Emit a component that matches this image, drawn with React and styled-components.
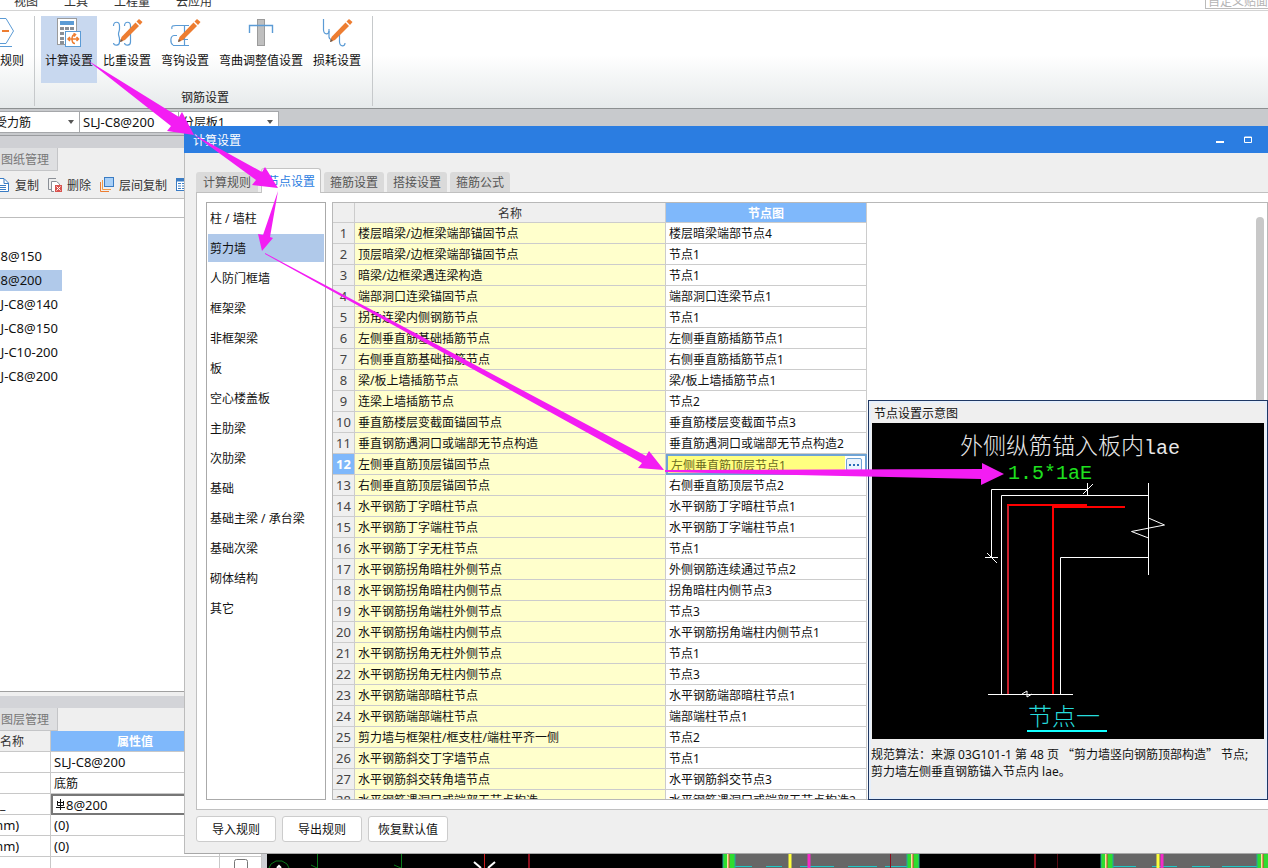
import React from "react";
import styled, { createGlobalStyle, css } from "styled-components";

const menus = ["视图", "工具", "工程量", "云应用"];

const treeItems = [
  { name: "C8@150", end: 42 },
  { name: "C8@200", end: 42, active: true },
  { name: "J-C8@140", end: 58 },
  { name: "J-C8@150", end: 58 },
  { name: "J-C10-200", end: 58 },
  { name: "J-C8@200", end: 58 },
];

const tabs = ["计算规则", "节点设置", "箍筋设置", "搭接设置", "箍筋公式"];

const members = [
  "柱 / 墙柱",
  "剪力墙",
  "人防门框墙",
  "框架梁",
  "非框架梁",
  "板",
  "空心楼盖板",
  "主肋梁",
  "次肋梁",
  "基础",
  "基础主梁 / 承台梁",
  "基础次梁",
  "砌体结构",
  "其它",
];

const nodes = [
  ["楼层暗梁/边框梁端部锚固节点", "楼层暗梁端部节点4"],
  ["顶层暗梁/边框梁端部锚固节点", "节点1"],
  ["暗梁/边框梁遇连梁构造", "节点1"],
  ["端部洞口连梁锚固节点", "端部洞口连梁节点1"],
  ["拐角连梁内侧钢筋节点", "节点1"],
  ["左侧垂直筋基础插筋节点", "左侧垂直筋插筋节点1"],
  ["右侧垂直筋基础插筋节点", "右侧垂直筋插筋节点1"],
  ["梁/板上墙插筋节点", "梁/板上墙插筋节点1"],
  ["连梁上墙插筋节点", "节点2"],
  ["垂直筋楼层变截面锚固节点", "垂直筋楼层变截面节点3"],
  ["垂直钢筋遇洞口或端部无节点构造", "垂直筋遇洞口或端部无节点构造2"],
  ["左侧垂直筋顶层锚固节点", "左侧垂直筋顶层节点1"],
  ["右侧垂直筋顶层锚固节点", "右侧垂直筋顶层节点2"],
  ["水平钢筋丁字暗柱节点", "水平钢筋丁字暗柱节点1"],
  ["水平钢筋丁字端柱节点", "水平钢筋丁字端柱节点1"],
  ["水平钢筋丁字无柱节点", "节点1"],
  ["水平钢筋拐角暗柱外侧节点", "外侧钢筋连续通过节点2"],
  ["水平钢筋拐角暗柱内侧节点", "拐角暗柱内侧节点3"],
  ["水平钢筋拐角端柱外侧节点", "节点3"],
  ["水平钢筋拐角端柱内侧节点", "水平钢筋拐角端柱内侧节点1"],
  ["水平钢筋拐角无柱外侧节点", "节点1"],
  ["水平钢筋拐角无柱内侧节点", "节点3"],
  ["水平钢筋端部暗柱节点", "水平钢筋端部暗柱节点1"],
  ["水平钢筋端部端柱节点", "端部端柱节点1"],
  ["剪力墙与框架柱/框支柱/端柱平齐一侧", "节点2"],
  ["水平钢筋斜交丁字墙节点", "节点1"],
  ["水平钢筋斜交转角墙节点", "水平钢筋斜交节点3"],
  ["水平钢筋遇洞口或端部无节点构造", "水平钢筋遇洞口或端部无节点构造2"],
];

const Pencil = () => (
  <g fill="#ed7d31">
    <path d="M9 25 L10.5 20 L24.5 5.5 L28 9 L14 23 Z" />
    <path d="M25.5 4.5 L28 2 L31.5 5 L29 8 Z" />
    <path d="M9 25 L9.8 22 L12 24 Z" fill="#6b5a50" />
  </g>
);

const CalcIcon = () => (
  <RibbonIcon viewBox="0 0 32 32">
    <rect x="4.5" y="1.5" width="19" height="26" fill="#fff" stroke="#9b9b9b" />
    <rect x="7" y="4" width="14" height="4" fill="#5b9bd5" />
    {[10, 15, 20, 24].map((y) =>
      [7, 12, 17].map((x) => (
        <rect key={x + "-" + y} x={x} y={y} width="4" height="3" fill="#8a8f96" />
      ))
    )}
    <rect x="12.5" y="14.5" width="15" height="15" fill="#fff" stroke="#5b9bd5" />
    <path
      d="M15 22 H25 M17 20 L15 22 L17 24 M22 17.5 C19 18 19 20 19 22 C19 25 20 26.5 22 26.5 M20.5 16.5 L22.5 17.5 L21 19.5 M23.5 20 L25.5 22 L23.5 24"
      fill="none"
      stroke="#ed7d31"
      strokeWidth="1.5"
    />
  </RibbonIcon>
);

const WeightIcon = () => (
  <RibbonIcon viewBox="0 0 32 32">
    <g fill="none" stroke="#5b9bd5" strokeWidth="1.2">
      <path d="M2.5 9 C2.5 4 8.5 4 8.5 9 V12 C8.5 14 7.5 15 7.5 17 C7.5 19 8.5 20 8.5 22 V25 C8.5 29 3 29 2.5 26" />
      <path d="M13.5 9 C13.5 4 19.5 4 19.5 9 V25 C19.5 29 14 29 13.5 26" />
    </g>
    <Pencil />
  </RibbonIcon>
);

const HookIcon = () => (
  <RibbonIcon viewBox="0 0 32 32">
    <g fill="none" stroke="#5b9bd5" strokeWidth="1.2">
      <path d="M3 12 C2 8.5 4 8.5 7 8.5 H20" />
      <path d="M8 18.5 H5 C1 19 1 26 4 28 M4 28.5 H20" />
      <path d="M15.5 9 V28 M11 22.5 H19" />
    </g>
    <Pencil />
  </RibbonIcon>
);

const BendIcon = () => (
  <RibbonIcon viewBox="0 0 32 32">
    <rect x="12.5" y="2.5" width="7" height="26" fill="#bfbfbf" stroke="#9b9b9b" />
    <path d="M4.5 16 V8.5 H27.5 V16" fill="none" stroke="#5b9bd5" strokeWidth="1.4" />
  </RibbonIcon>
);

const LossIcon = () => (
  <RibbonIcon viewBox="0 0 32 32">
    <g fill="none" stroke="#5b9bd5" strokeWidth="1.2">
      <path d="M2.5 2 V13 C3 18 8 18 8 14" />
      <path d="M8 12 V20 C9 24 13 22 13 19 M18.5 17 V25 C19 30 24 30 24 26" />
    </g>
    <Pencil />
  </RibbonIcon>
);

const ribbon = [
  { label: "计算设置", Icon: CalcIcon, active: true },
  { label: "比重设置", Icon: WeightIcon },
  { label: "弯钩设置", Icon: HookIcon },
  { label: "弯曲调整值设置", Icon: BendIcon },
  { label: "损耗设置", Icon: LossIcon },
];

const Combo = ({ label, value, width, cut, latin }) => (
  <ComboBox $width={width}>
    <ComboSelect aria-label={label} $cut={cut} $latin={latin} defaultValue={value}>
      <option>{value}</option>
    </ComboSelect>
    <Caret viewBox="0 0 6 4">
      <path d="M0 0 H6 L3 4 Z" fill="#555" />
    </Caret>
  </ComboBox>
);

const Ribbon = () => (
  <RibbonBar>
    <RuleGroup>
      <RuleButton>
        <RuleIcon viewBox="0 0 24 32">
          <path d="M0 1.5 H6 L13.5 14 L6 26.5 H0" fill="none" stroke="#5b9bd5" />
          <path d="M2 14 H9" stroke="#ed7d31" strokeWidth="2" />
          <path d="M0 29.5 H12" stroke="#5b9bd5" />
        </RuleIcon>
        规则
      </RuleButton>
    </RuleGroup>
    <RibbonGroup>
      <RibbonButtons>
        {ribbon.map(({ label, Icon, active }) => (
          <RibbonButton key={label} $active={active}>
            <Icon />
            {label}
          </RibbonButton>
        ))}
      </RibbonButtons>
      <GroupLabel>钢筋设置</GroupLabel>
    </RibbonGroup>
  </RibbonBar>
);

const TreeTools = () => (
  <ToolRow>
    <Tool>
      <svg width="9" height="16" viewBox="0 0 9 16">
        <path d="M0 1.5 H4 L8.5 6 V14.5 H0" fill="#fff" stroke="#3a7cc4" />
        <path d="M4 2 V6.5 H8" fill="none" stroke="#3a7cc4" />
        <path d="M0 8.5 H6 M0 10.5 H6 M0 12.5 H6" stroke="#3a7cc4" />
      </svg>
      <ToolText>复制</ToolText>
    </Tool>
    <Tool>
      <svg width="14" height="16" viewBox="0 0 14 16">
        <path d="M3 12.5 H0.5 V1.5 H8" fill="none" stroke="#8a8f96" />
        <path d="M6 14.5 H3.5 V4.5 H8.5 L11.5 7 V8" fill="#fff" stroke="#8a8f96" />
        <rect x="7" y="8" width="7" height="7" fill="#d9534f" />
        <path d="M8.5 9.5 L12.5 13.5 M12.5 9.5 L8.5 13.5" stroke="#fff" />
      </svg>
      <ToolText>删除</ToolText>
    </Tool>
    <Tool>
      <svg width="14" height="16" viewBox="0 0 14 16">
        <rect x="4.5" y="0.5" width="9" height="9" fill="#a9d0f7" stroke="#3a7cc4" />
        <path d="M2.5 3 V12.5 H11" fill="none" stroke="#ed9a4a" />
        <path d="M0.5 5 V14.5 H9" fill="none" stroke="#ed7d31" />
      </svg>
      <ToolText>层间复制</ToolText>
    </Tool>
    <Tool aria-label="更多">
      <svg width="14" height="16" viewBox="0 0 14 16">
        <rect x="0.5" y="1.5" width="13" height="12" fill="#fff" stroke="#3a7cc4" />
        <path d="M1 3 H13" stroke="#3a7cc4" strokeWidth="3" />
        <path d="M2 6.5 H12 M2 9 H12 M2 11.5 H12" stroke="#3a7cc4" strokeDasharray="3 1" />
      </svg>
    </Tool>
  </ToolRow>
);

const SidePane = () => (
  <Side>
    <SideTabs>
      <SideTab>图纸管理</SideTab>
    </SideTabs>
    <TreeTools />
    <SearchInput aria-label="搜索构件" />
    <Tree>
      {treeItems.map((item) => (
        <TreeItem key={item.name} $active={item.active}>
          <TreeText $end={item.end}>{item.name}</TreeText>
        </TreeItem>
      ))}
    </Tree>
    <Splitter />
    <SideTabs>
      <SideTab>图层管理</SideTab>
    </SideTabs>
    <PropBox>
      <PropTable>
        <colgroup>
          <col width="51" />
          <col width="169" />
          <col />
        </colgroup>
        <thead>
          <tr>
            <th>名称</th>
            <PropValueHead>属性值</PropValueHead>
            <th />
          </tr>
        </thead>
        <tbody>
          <tr>
            <td />
            <PropValue>SLJ-C8@200</PropValue>
            <td />
          </tr>
          <tr>
            <td />
            <PropValue $cjk>底筋</PropValue>
            <td />
          </tr>
          <tr>
            <td>_</td>
            <PropValue $focus>
              <svg width="10" height="11" viewBox="0 0 10 11">
                <path
                  d="M4.5 0 V11 M1.5 2 V6.5 H7.5 V2 M1.5 3.5 H7.5 M0 8.5 H9"
                  fill="none"
                  stroke="#111"
                />
              </svg>
              8@200
            </PropValue>
            <td />
          </tr>
          <tr>
            <UnitCell>mm)</UnitCell>
            <PropValue>(0)</PropValue>
            <td />
          </tr>
          <tr>
            <UnitCell>mm)</UnitCell>
            <PropValue>(0)</PropValue>
            <td />
          </tr>
          <tr>
            <td />
            <td />
            <CheckCell>
              <input type="checkbox" aria-label="附加" />
            </CheckCell>
          </tr>
        </tbody>
      </PropTable>
    </PropBox>
  </Side>
);

const wallBands = [
  [456, 468],
  [640, 652],
  [834, 846],
  [990, 1002],
];

const Canvas = () => (
  <CanvasArea>
    <svg width="1001" height="15">
      <path d="M2 15 L4 11 L9 8 H15 L20 11 L22 15" fill="none" stroke="#0a7a1a" />
      <path d="M50.5 0 V15 M134.5 0 V15 M44 12 L50 15 M127 12 L134 15" stroke="#0a7a1a" />
      <path d="M10 15 L12 13 L14 15 M207 9 L214 15 M228 9 L221 15" fill="none" stroke="#fff" strokeWidth="2" />
      <path d="M217.5 0 V15" stroke="#d01c1c" />
      <path d="M262 0 V15 M768 0 V15" stroke="#8a0f1d" strokeWidth="2" />
      <path d="M790.5 0 V15" stroke="#5a0b12" />
      <rect x="468" width="172" height="15" fill="#666" />
      <rect x="846" width="144" height="15" fill="#666" />
      <path d="M468 13.5 H485 M499 13.5 H515 M533 13.5 H567 M581 13.5 H610 M618 13.5 H640 M846 13.5 H869 M885 13.5 H910 M925 13.5 H943 M955 13.5 H990" stroke="#20c8c8" />
      {wallBands.map(([a, b]) => (
        <g key={a}>
          <rect x={a} width={b - a} height="15" fill="#2fdc2f" />
          <path d={`M${a + 5} 0 V15`} stroke="#f5e9a0" strokeWidth="2" />
          <path d={`M${a + 6} 0 V15`} stroke="#d0392b" />
          <path d={`M${a} 0 V15 M${b} 0 V15`} stroke="#20a8a0" />
        </g>
      ))}
      <path d="M523 0 V15 M891 0 V15" stroke="#ffff3a" strokeWidth="3" />
      <path d="M542 0 V15 M895 0 V15" stroke="#f52bc8" strokeWidth="3" />
      <path d="M623.5 0 V15" stroke="#8a0f1d" />
    </svg>
  </CanvasArea>
);

// wall top node, drawn in a 392 x 316 space
const NodeDrawing = () => (
  <Drawing viewBox="0 0 392 316" role="img" aria-label="节点一">
    <text x="88" y="31" fontSize="23" fill="#e8e8e8">
      外侧纵筋锚入板内<tspan fontSize="20">lae</tspan>
    </text>
    <text x="136" y="56" fontSize="20" fill="#1fe01f">
      1.5*1aE
    </text>
    <g fill="none" stroke="#fff">
      <path d="M119.5 134 V66.5 H215.5 M215.5 60 V72 M211 71 L221 61" />
      <path d="M113 134.5 H126 M115 130 L125 140" />
      <path d="M129.5 271 V72.5 H276" />
      <path d="M276.5 60 V152 M276.5 134.5 H188.5 V271" />
      <path d="M276.5 95 L292.5 102 L259.5 108.5 L276.5 115" />
      <path d="M116 271.5 H201 M150 271 L155 268 V274 L160 271" />
    </g>
    <path d="M136 271 V82" stroke="#c8202c" strokeWidth="2" />
    <path d="M135 82 H215 M181 271 V84 H253" fill="none" stroke="#f00" strokeWidth="2" />
    <path d="M181 83.5 H215" stroke="#f00" strokeWidth="3" />
    <text x="156" y="302" fontSize="24" fill="#26dcdc">
      节点一
    </text>
    <path d="M155 308 H235" stroke="#1ff" strokeWidth="2" />
  </Drawing>
);

const NodeTable = () => (
  <Grid>
    <colgroup>
      <col width="22" />
      <col width="311" />
      <col width="201" />
    </colgroup>
    <thead>
      <tr>
        <th />
        <th>名称</th>
        <ActiveHead>节点图</ActiveHead>
      </tr>
    </thead>
    <tbody>
      {nodes.map(([name, value], i) => {
        const selected = i === 11;
        return (
          <tr key={name}>
            <RowNumber scope="row" $active={selected}>
              {i + 1}
            </RowNumber>
            <NameCell>{name}</NameCell>
            {selected ? (
              <EditCell>
                <EditBox>
                  <EditInput aria-label={name} defaultValue={value} />
                  <MoreButton aria-label="选择节点">
                    <svg width="12" height="2">
                      <path d="M1 1 H3 M5 1 H7 M9 1 H11" stroke="#2b6cb8" strokeWidth="2" />
                    </svg>
                  </MoreButton>
                </EditBox>
              </EditCell>
            ) : (
              <td>{value}</td>
            )}
          </tr>
        );
      })}
    </tbody>
  </Grid>
);

const SettingsDialog = () => (
  <Dialog role="dialog" aria-label="计算设置">
    <TitleBar>
      <Title>计算设置</Title>
      <WindowButton aria-label="最小化">
        <svg width="8" height="8">
          <rect y="5" width="8" height="2" fill="#fff" />
        </svg>
      </WindowButton>
      <WindowButton aria-label="最大化">
        <svg width="8" height="8">
          <path d="M0.5 1 H7.5 V6.5 H0.5 Z M0 1.5 H8" fill="none" stroke="#fff" />
        </svg>
      </WindowButton>
    </TitleBar>
    <DialogBody>
      <TabBar role="tablist">
        {tabs.map((tab, i) => (
          <Tab key={tab} role="tab" aria-selected={i === 1} $active={i === 1}>
            {tab}
          </Tab>
        ))}
      </TabBar>
      <Panel>
        <MemberList>
          {members.map((member, i) => (
            <Member key={member} $active={i === 1}>
              {member}
            </Member>
          ))}
        </MemberList>
        <GridArea>
          <GridBox>
            <NodeTable />
          </GridBox>
          <ScrollThumb />
          <Hint>
            <HintTitle>节点设置示意图</HintTitle>
            <NodeDrawing />
            <HintText>
              规范算法：来源 03G101-1 第 48 页<Quoted>“剪力墙竖向钢筋顶部构造”</Quoted>节点;
              <br />
              剪力墙左侧垂直钢筋锚入节点内 lae。
            </HintText>
          </Hint>
        </GridArea>
      </Panel>
      <Footer>
        <FooterButton>导入规则</FooterButton>
        <FooterButton>导出规则</FooterButton>
        <FooterButton>恢复默认值</FooterButton>
      </Footer>
    </DialogBody>
  </Dialog>
);

const Arrows = () => (
  <ArrowLayer width="1010" height="500" fill="#f31df3">
    <path d="M87 60 L179 117 L182 112 L194 135 L167 131 L171 126 Z" />
    <path d="M193 134 L262 172 L265 167 L278 188 L252 185 L256 180 Z" />
    <path d="M278 191 L270 237 L273 238 L262 251 L258 234 L263 235 Z" />
    <path d="M265 253 L646 456 L649 451 L664 470 L638 468 L642 463 L265 254 Z" />
    <path d="M665 470 L982 469 L982 463 L1004 474 L981 485 L981 479 L665 472 Z" />
  </ArrowLayer>
);

const App = () => {
  return (
    <Screen>
      <GlobalStyle />
      <MenuBar>
        {menus.map((menu) => (
          <MenuItem key={menu}>{menu}</MenuItem>
        ))}
        <QuickInput aria-label="自定义" defaultValue="自定义贴面怎" />
      </MenuBar>
      <Ribbon />
      <ComboBar>
        <Combo label="构件类型" value="受力筋" width={80} cut />
        <Combo label="构件" value="SLJ-C8@200" width={99} latin />
        <Combo label="楼层板" value="分层板1" width={100} />
      </ComboBar>
      <Workspace>
        <SidePane />
        <Canvas />
      </Workspace>
      <SettingsDialog />
      <Arrows />
    </Screen>
  );
};

export default App;

const GlobalStyle = createGlobalStyle`
  * {
    box-sizing: border-box;
  }

  body {
    margin: 0;
    overflow: hidden;
  }

  body, button, input, select {
    font-family: "Noto Sans", "Noto Sans CJK SC", sans-serif;
    font-size: 12px;
    line-height: 16px;
    color: #111;
  }

  button {
    padding: 0;
    border: 0;
    background: none;
    white-space: nowrap;
  }

  svg {
    flex: none;
  }
`;

const Screen = styled.div`
  position: relative;
  display: flex;
  flex-direction: column;
  height: 100vh;
  overflow: hidden;
  background: #efefef;
`;

const MenuBar = styled.nav`
  display: flex;
  align-items: flex-end;
  gap: 26px;
  height: 11px;
  flex: none;
  padding-left: 14px;
  overflow: hidden;
  background: #fff;
  border-bottom: 1px solid #d4d4d4;
`;

const MenuItem = styled.button`
  color: #333;
`;

const QuickInput = styled.input`
  width: 63px;
  height: 14px;
  margin: 0 0 1px auto;
  padding: 0 0 0 2px;
  border: 1px solid #bbb;
  border-right: 0;
  color: #b4b4b4;
`;

const RibbonBar = styled.div`
  display: flex;
  flex: none;
  height: 98px;
  padding: 5px 0 2px;
  background: linear-gradient(#fff 45%, #e6eaeb);
  border-bottom: 1px solid #8c9091;
`;

const RuleGroup = styled.div`
  width: 35px;
  border-right: 1px solid #c6c9cb;
`;

const RuleButton = styled.button`
  display: flex;
  flex-direction: column;
  align-items: flex-start;
  gap: 4px;
  padding-top: 1px;
`;

const RuleIcon = styled.svg`
  width: 24px;
  height: 32px;
`;

const RibbonGroup = styled.div`
  display: flex;
  flex-direction: column;
  justify-content: space-between;
  align-items: center;
  padding: 0 7px 0 6px;
  border-right: 1px solid #c6c9cb;
`;

const RibbonButtons = styled.div`
  display: flex;
  gap: 2px;
`;

const RibbonButton = styled.button`
  display: flex;
  flex-direction: column;
  align-items: center;
  gap: 4px;
  height: 67px;
  padding: 1px 4px;
  background: ${(props) => (props.$active ? "#c8d8ef" : "none")};
`;

const RibbonIcon = styled.svg`
  width: 32px;
  height: 32px;
`;

const GroupLabel = styled.div`
  padding-left: 4px;
  color: #222;
`;

const ComboBar = styled.div`
  display: flex;
  flex: none;
  height: 27px;
  padding: 2px 0;
  background: #c8cacd;
  border-bottom: 1px solid #9a9c9f;
`;

const ComboBox = styled.div`
  display: flex;
  align-items: center;
  width: ${(props) => props.$width}px;
  padding: 0 5px 0 3px;
  overflow: hidden;
  background: #fff;
  border: 1px solid #a5a7aa;
  border-left-width: 0;
`;

const ComboSelect = styled.select`
  flex: 1;
  min-width: 0;
  margin-left: ${(props) => (props.$cut ? "-8px" : "0")};
  padding: ${(props) => (props.$latin ? "0" : "1px 0 0")};
  border: 0;
  appearance: none;
  background: none;
  font-size: ${(props) => (props.$latin ? "13px" : "12px")};
`;

const Caret = styled.svg`
  width: 6px;
  height: 4px;
`;

const Workspace = styled.div`
  display: flex;
  flex: 1;
  min-height: 0;
`;

const Side = styled.aside`
  display: flex;
  flex-direction: column;
  width: 267px;
  flex: none;
  padding-top: 12px;
  background: #cfd0d4;
`;

const SideTabs = styled.div`
  flex: none;
  height: 23px;
  background: #efefef;
`;

const SideTab = styled.button`
  width: 58px;
  height: 23px;
  padding: 2px 0 0 1px;
  text-align: left;
  color: #777;
  background: #dedfe1;
  border-right: 1px solid #c4c5c7;
  border-bottom: 1px solid #c4c5c7;
`;

const ToolRow = styled.div`
  display: flex;
  align-items: center;
  flex: none;
  gap: 9px;
  height: 28px;
  background: #efefef;
  border-bottom: 1px solid #c0c0c0;
`;

const Tool = styled.button`
  display: flex;
  align-items: center;
  gap: 5px;
  color: #333;

  &:first-child {
    gap: 6px;
  }
`;

const ToolText = styled.span`
  padding-top: 2px;
`;

const SearchInput = styled.input`
  flex: none;
  height: 19px;
  border: 0;
  border-bottom: 1px solid #bdbdbd;
  background: #fff;
`;

const Tree = styled.ul`
  flex: 1;
  min-height: 0;
  margin: 0;
  padding: 28px 0 0;
  overflow: hidden;
  list-style: none;
  background: #fff;
  border-bottom: 1px solid #a0a0a0;
`;

const TreeItem = styled.li`
  width: 62px;
  height: 21px;
  margin-bottom: 3px;
  background: ${(props) => (props.$active ? "#b0c9ea" : "none")};
`;

const TreeText = styled.div`
  display: flex;
  justify-content: flex-end;
  width: ${(props) => props.$end}px;
  font-size: 13px;
  line-height: 21px;
  white-space: nowrap;
`;

const Splitter = styled.div`
  flex: none;
  height: 16px;
  background: #d3d4d8;
  border-top: 4px solid #efefef;
`;

const PropBox = styled.div`
  flex: none;
  height: 137px;
  overflow: hidden;
`;

const PropTable = styled.table`
  width: 262px;
  table-layout: fixed;
  border-collapse: separate;
  border-spacing: 0;
  background: #fff;

  th,
  td {
    height: 21px;
    padding: 2px 0 0;
    overflow: hidden;
    text-align: left;
    line-height: 18px;
    white-space: nowrap;
    border-right: 1px solid #c8c8c8;
    border-bottom: 1px solid #c8c8c8;
  }

  th {
    font-weight: 400;
    color: #333;
    background: #efefef;
  }
`;

const PropValueHead = styled.th`
  && {
    text-align: center;
    font-weight: 700;
    color: #fff;
    background: #7fb8fb;
  }
`;

const latinCell = css`
  padding-top: 0;
  font-size: 13px;
  line-height: 20px;
`;

const PropValue = styled.td`
  && {
    ${(props) => !props.$cjk && latinCell}
    padding-left: 3px;
    ${(props) =>
      props.$focus &&
      css`
        line-height: 16px;
        border: 2px solid #777;
      `}
  }
`;

const UnitCell = styled.td`
  && {
    ${latinCell}
    text-indent: -9px;
  }
`;

const CheckCell = styled.td`
  && {
    padding: 0;
    text-align: center;
  }

  input {
    width: 14px;
    height: 14px;
    margin: 2px 0 0;
  }
`;

const CanvasArea = styled.div`
  display: flex;
  align-items: flex-end;
  flex: 1;
  min-width: 0;
  overflow: hidden;
  background: #000;
`;

const Dialog = styled.section`
  position: absolute;
  top: 126px;
  right: 0;
  bottom: 14px;
  left: 184px;
  display: flex;
  flex-direction: column;
  background: #efefef;
`;

const TitleBar = styled.header`
  display: flex;
  align-items: center;
  gap: 20px;
  flex: none;
  height: 27px;
  padding: 0 16px 0 9px;
  background: #2b7de1;
`;

const Title = styled.h1`
  flex: 1;
  margin: 0;
  padding-top: 2px;
  font-size: 12px;
  font-weight: 400;
  color: #fff;
`;

const WindowButton = styled.button`
  display: flex;
`;

const DialogBody = styled.div`
  display: flex;
  flex-direction: column;
  flex: 1;
  min-height: 0;
  padding-left: 11px;
  border-left: 1px solid #bcbcbc;
  border-bottom: 1px solid #a8a8a8;
`;

const TabBar = styled.div`
  display: flex;
  align-items: flex-end;
  flex: none;
  gap: 3px;
  height: 39px;
`;

const Tab = styled.button`
  width: 60px;
  height: 20px;
  padding-top: 2px;
  color: #555;
  background: #dadada;
  border-radius: 3px 3px 0 0;

  &:first-child {
    width: 62px;
  }

  ${(props) =>
    props.$active &&
    css`
      position: relative;
      height: 25px;
      margin-bottom: -1px;
      color: #2b7de1;
      background: #fff;
      border: 1px solid #c4c4c4;
      border-bottom: 0;
    `}
`;

const Panel = styled.div`
  display: flex;
  flex: 1;
  gap: 6px;
  min-height: 0;
  padding: 9px 0 9px 9px;
  background: #fff;
  border: 1px solid #c0c0c0;
  border-right: 0;
`;

const MemberList = styled.ul`
  flex: none;
  width: 120px;
  margin: 0;
  padding: 1px;
  overflow: hidden;
  list-style: none;
  border: 1px solid #aaa;
`;

const Member = styled.li`
  height: 28px;
  margin-bottom: 2px;
  padding-left: 2px;
  line-height: 30px;
  white-space: nowrap;
  background: ${(props) => (props.$active ? "#b0c9ea" : "none")};
`;

const GridArea = styled.div`
  position: relative;
  display: flex;
  flex: 1;
  min-width: 0;
`;

const GridBox = styled.div`
  flex: 1;
  min-width: 0;
  overflow: hidden;
  border: 1px solid #b8b8b8;
`;

const Grid = styled.table`
  width: 534px;
  table-layout: fixed;
  border-collapse: separate;
  border-spacing: 0;

  th,
  td {
    height: 21px;
    padding: 2px 0 0 3px;
    overflow: hidden;
    line-height: 18px;
    white-space: nowrap;
    border-right: 1px solid #ccc;
    border-bottom: 1px solid #ccc;
  }

  th {
    padding: 2px 0 0;
    font-weight: 400;
    color: #333;
    background: #efefef;
  }

  thead th {
    height: 20px;
    line-height: 17px;
  }
`;

const ActiveHead = styled.th`
  && {
    font-weight: 700;
    color: #fff;
    background: #7fb8fb;
  }
`;

const RowNumber = styled.th`
  && {
    ${latinCell}
    color: ${(props) => (props.$active ? "#fff" : "#444")};
    background: ${(props) => (props.$active ? "#7fb8fb" : "#efefef")};
    font-weight: ${(props) => (props.$active ? 700 : 400)};
  }
`;

const NameCell = styled.td`
  background: #ffffcc;
`;

const EditCell = styled.td`
  && {
    padding: 0;
    border: 2px solid #6fa3d4;
  }
`;

const EditBox = styled.div`
  display: flex;
  align-items: center;
  height: 17px;
  padding-right: 3px;
  background: #fff;
`;

const EditInput = styled.input`
  flex: 1;
  min-width: 0;
  height: 17px;
  margin-right: 1px;
  padding: 0 0 0 3px;
  border: 0;
  color: #6b6b1e;
  background: #ffff80;
`;

const MoreButton = styled.button`
  display: flex;
  align-items: center;
  justify-content: center;
  width: 16px;
  height: 13px;
  background: #eaf3fd;
  border: 1px solid #6fa3d4;
  border-radius: 2px;
`;

const ScrollThumb = styled.div`
  position: absolute;
  top: 15px;
  right: 4px;
  width: 8px;
  height: 240px;
  background: #c8c8c8;
  border-radius: 4px;
`;

const Hint = styled.aside`
  position: absolute;
  right: 0;
  bottom: 0;
  width: 400px;
  height: 400px;
  padding: 2px;
  background: #efefef;
  border: 1px solid #1f3864;
  box-shadow: inset 0 0 0 2px #e6effb;
`;

const HintTitle = styled.h2`
  height: 20px;
  margin: 0;
  padding-left: 3px;
  font-size: 12px;
  font-weight: 400;
  line-height: 22px;
`;

const Drawing = styled.svg`
  display: block;
  width: 392px;
  height: 316px;
  margin: 0 1px;
  background: #000;
  font-family: "Liberation Mono", "Noto Sans CJK SC", monospace;
  font-weight: 300;
`;

const HintText = styled.p`
  margin: 0;
  padding-top: 7px;
  line-height: 17px;
  white-space: nowrap;
`;

const Quoted = styled.span`
  padding: 0 3px;
  font-family: "Noto Sans CJK SC", sans-serif;
  line-height: 1;
`;

const Footer = styled.footer`
  display: flex;
  gap: 6px;
  flex: none;
  height: 43px;
  padding-top: 6px;
`;

const FooterButton = styled.button`
  width: 80px;
  height: 26px;
  padding-top: 2px;
  background: #fff;
  border: 1px solid #ccc;
  border-radius: 3px;
`;

const ArrowLayer = styled.svg`
  position: absolute;
  top: 0;
  left: 0;
  pointer-events: none;
`;
